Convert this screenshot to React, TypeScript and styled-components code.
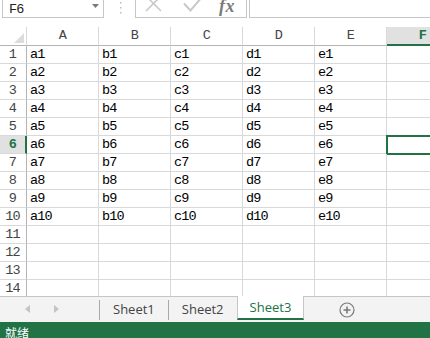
import React from 'react'
import styled, { createGlobalStyle } from 'styled-components'

const GREEN = '#217346'
const GRID = '#d9d9d9'
const HEAD_LINE = '#b4b4b4'

const Global = createGlobalStyle`
  html, body {
    margin: 0;
    padding: 0;
    background: #fff;
  }
  body {
    width: 430px;
    height: 338px;
    overflow: hidden;
    font-family: "Liberation Mono", monospace;
  }
`

const cols = ['A', 'B', 'C', 'D', 'E', 'F']
const rows = Array.from({ length: 14 }, (_, i) => i + 1)
const SEL_COL = 'F'
const SEL_ROW = 6

const cellValue = (col: string, row: number) => {
  if (row > 10 || col === 'F') return ''
  return col.toLowerCase() + row
}

const App = () => {
  return (
    <Page>
      <Global />
      <Toolbar>
        <NameBox>
          <span>F6</span>
          <svg width="7" height="4" viewBox="0 0 7 4">
            <path d="M0 0 H7 L3.5 4 Z" fill="#7a7a7a" />
          </svg>
        </NameBox>
        <Dots width="3" height="16" viewBox="0 0 3 16">
          <rect x="1" y="2" width="1.5" height="1.5" fill="#bdbdbd" />
          <rect x="1" y="7" width="1.5" height="1.5" fill="#bdbdbd" />
          <rect x="1" y="12" width="1.5" height="1.5" fill="#bdbdbd" />
        </Dots>
        <CmdBox>
          <svg width="18" height="16" viewBox="0 0 18 16">
            <path d="M1 -2 L16 13 M16 -2 L1 13" stroke="#c8c8c8" strokeWidth="1.6" fill="none" />
          </svg>
          <svg width="20" height="16" viewBox="0 0 20 16">
            <path d="M1 5.5 L7.5 12.5 L19 -1" stroke="#c8c8c8" strokeWidth="2" fill="none" />
          </svg>
          <Fx>fx</Fx>
        </CmdBox>
        <FormulaBox />
      </Toolbar>

      <Sheet>
        <Corner>
          <svg width="10" height="10" viewBox="0 0 10 10">
            <path d="M10 0 V10 H0 Z" fill="#dcdcdc" />
          </svg>
        </Corner>
        {cols.map((c) => (
          <ColHead key={c} $active={c === SEL_COL}>{c}</ColHead>
        ))}
        {rows.map((r) => (
          <React.Fragment key={r}>
            <RowHead $active={r === SEL_ROW}>{r}</RowHead>
            {cols.map((c) => (
              <Cell key={c} $selected={c === SEL_COL && r === SEL_ROW}>
                {cellValue(c, r)}
              </Cell>
            ))}
          </React.Fragment>
        ))}
      </Sheet>

      <TabBar>
        <Nav>
          <svg width="5" height="8" viewBox="0 0 5 8">
            <path d="M5 0 V8 L0 4 Z" fill="#c4c4c4" />
          </svg>
          <svg width="5" height="8" viewBox="0 0 5 8">
            <path d="M0 0 V8 L5 4 Z" fill="#c4c4c4" />
          </svg>
        </Nav>
        <Sep />
        <Tab>Sheet1</Tab>
        <Sep />
        <Tab>Sheet2</Tab>
        <Tab $active>Sheet3</Tab>
        <AddBtn width="16" height="16" viewBox="0 0 16 16">
          <circle cx="8" cy="8" r="7" stroke="#7a7a7a" strokeWidth="1.2" fill="none" />
          <path d="M4.5 8 H11.5 M8 4.5 V11.5" stroke="#7a7a7a" strokeWidth="1.6" />
        </AddBtn>
      </TabBar>

      <Status>就绪</Status>
    </Page>
  )
}

export default App

const Page = styled.div`
  width: 430px;
  height: 338px;
  display: flex;
  flex-direction: column;
  overflow: hidden;
  background: #fff;
`

const Toolbar = styled.div`
  height: 18px;
  flex: none;
  display: flex;
  align-items: flex-end;
  overflow: hidden;
  margin-bottom: 9px;
`

const NameBox = styled.div`
  box-sizing: border-box;
  width: 102px;
  height: 22px;
  margin-left: 2px;
  border: 1px solid #c6c6c6;
  display: flex;
  align-items: center;
  justify-content: space-between;
  padding: 4px 4px 0 6px;
  font-size: 13.5px;
  letter-spacing: -0.8px;
  color: #222;
  svg {
    margin-top: -6px;
  }
`

const Dots = styled.svg`
  margin-left: 15px;
  align-self: flex-start;
`

const CmdBox = styled.div`
  box-sizing: border-box;
  width: 112px;
  height: 22px;
  margin-left: 13px;
  border: 1px solid #c6c6c6;
  display: flex;
  align-items: flex-end;
  padding: 0 0 3px 9px;
  svg + svg {
    margin-left: 20px;
  }
`

const Fx = styled.span`
  margin-left: 16px;
  font-family: "Liberation Serif", serif;
  font-style: italic;
  font-weight: bold;
  font-size: 18px;
  line-height: 16px;
  color: #7b7b7b;
  letter-spacing: 0.5px;
`

const FormulaBox = styled.div`
  box-sizing: border-box;
  flex: 1;
  height: 22px;
  margin-left: 2px;
  border: 1px solid #c6c6c6;
  border-right: none;
`

const Sheet = styled.div`
  height: 269px;
  flex: none;
  display: grid;
  grid-template-columns: 27px repeat(6, 72px);
  grid-template-rows: 19px;
  grid-auto-rows: 18px;
  overflow: hidden;
  font-size: 13.5px;
  letter-spacing: -0.8px;
`

const Corner = styled.div`
  box-sizing: border-box;
  border-right: 1px solid ${GRID};
  border-bottom: 1px solid ${HEAD_LINE};
  display: flex;
  align-items: flex-end;
  justify-content: flex-end;
  padding: 0 2px 2px 0;
`

const ColHead = styled.div<{ $active?: boolean }>`
  box-sizing: border-box;
  border-right: 1px solid ${GRID};
  border-bottom: ${(p) => (p.$active ? `2px solid ${GREEN}` : `1px solid ${HEAD_LINE}`)};
  background: ${(p) => (p.$active ? '#e1e1e1' : '#fff')};
  color: ${(p) => (p.$active ? GREEN : '#444')};
  font-weight: ${(p) => (p.$active ? 'bold' : 'normal')};
  text-align: center;
  line-height: 18px;
`

const RowHead = styled.div<{ $active?: boolean }>`
  box-sizing: border-box;
  border-right: ${(p) => (p.$active ? `2px solid ${GREEN}` : `1px solid ${HEAD_LINE}`)};
  border-bottom: 1px solid ${GRID};
  background: ${(p) => (p.$active ? '#e1e1e1' : '#fff')};
  color: ${(p) => (p.$active ? GREEN : '#444')};
  font-weight: ${(p) => (p.$active ? 'bold' : 'normal')};
  text-align: center;
  line-height: 18px;
  padding-right: ${(p) => (p.$active ? '0' : '1px')};
`

const Cell = styled.div<{ $selected?: boolean }>`
  box-sizing: border-box;
  border-right: 1px solid ${GRID};
  border-bottom: 1px solid ${GRID};
  padding-left: 3px;
  line-height: 18px;
  color: #000;
  white-space: nowrap;
  outline: ${(p) => (p.$selected ? `2px solid ${GREEN}` : 'none')};
  outline-offset: -1px;
`

const TabBar = styled.div`
  box-sizing: border-box;
  height: 26px;
  flex: none;
  display: flex;
  align-items: flex-start;
  background: #f3f3f3;
  border-top: 1px solid #c6c6c6;
  font-family: "Open Sans", sans-serif;
  font-size: 13px;
`

const Nav = styled.div`
  width: 99px;
  height: 24px;
  display: flex;
  align-items: center;
  gap: 24px;
  padding-left: 25px;
  box-sizing: border-box;
`

const Sep = styled.div`
  width: 1px;
  height: 20px;
  margin-top: 3px;
  background: #a9a9a9;
`

const Tab = styled.div<{ $active?: boolean }>`
  box-sizing: border-box;
  height: ${(p) => (p.$active ? '24px' : '23px')};
  margin-top: ${(p) => (p.$active ? '-1px' : '0')};
  padding: 0 ${(p) => (p.$active ? '12px' : '13px')};
  display: flex;
  align-items: center;
  color: ${(p) => (p.$active ? GREEN : '#444')};
  background: ${(p) => (p.$active ? '#fff' : 'transparent')};
  border-left: ${(p) => (p.$active ? '1px solid #c6c6c6' : 'none')};
  border-right: ${(p) => (p.$active ? '1px solid #c6c6c6' : 'none')};
  border-bottom: ${(p) => (p.$active ? `2px solid ${GREEN}` : 'none')};
`

const AddBtn = styled.svg`
  margin-left: 35px;
  margin-top: 5px;
`

const Status = styled.div`
  box-sizing: border-box;
  height: 16px;
  flex: none;
  background: ${GREEN};
  color: #fff;
  font-family: "Noto Sans CJK SC", sans-serif;
  font-size: 12px;
  line-height: 12px;
  padding: 5px 0 0 5px;
  overflow: hidden;
`
